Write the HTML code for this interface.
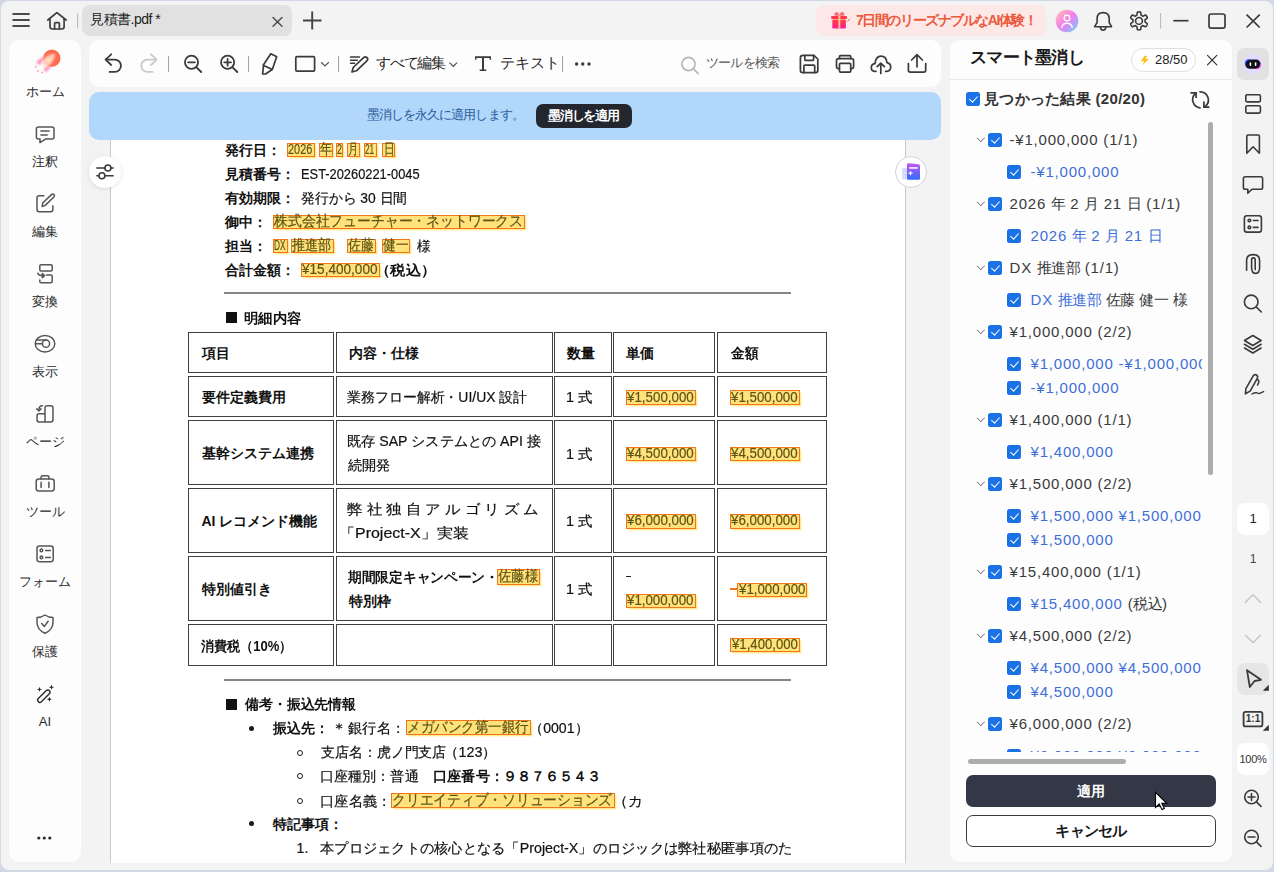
<!DOCTYPE html>
<html lang="ja">
<head>
<meta charset="utf-8">
<style>
*{box-sizing:border-box}
html,body{margin:0;padding:0}
body{width:1274px;height:872px;overflow:hidden;position:relative;background:#d3d8e6;font-family:"Liberation Sans",sans-serif;color:#222}
.a{position:absolute}
#win{left:1px;top:1px;width:1272px;height:869px;background:#f3f3f3;border-radius:8px}
.panel{position:absolute;background:#fdfdfd;border-radius:10px}
svg{position:absolute;overflow:visible}
.ic{fill:none;stroke:#3a3a3a;stroke-width:1.6;stroke-linecap:round;stroke-linejoin:round}
.nav{position:absolute;left:9px;width:72px;text-align:center;font-size:13px;color:#2a2a2a;line-height:16px}
.d{position:absolute;font-size:14px;line-height:18px;color:#111;white-space:nowrap;-webkit-text-stroke:.2px #111}
.b{font-weight:bold}
.d.b{-webkit-text-stroke:0;color:#111}
.hl{position:absolute;background:#ffe27c;border:1.8px solid #f0761c;box-shadow:1.5px 1.5px 1.5px rgba(255,215,60,.6);color:#5e5312;-webkit-text-stroke:.2px #5e5312;font-size:15px;line-height:12px;text-align:center;white-space:nowrap}
.cell{position:absolute;border:1px solid #404040}
.rp{position:absolute;font-size:15px;line-height:18px;white-space:nowrap;color:#3a3a3a;letter-spacing:.8px}
.cb{position:absolute;width:14px;height:14px;background:#1a72e6;border-radius:2.5px}
.cb::after{content:"";position:absolute;left:4.6px;top:2px;width:3.6px;height:7px;border:solid #fff;border-width:0 1.8px 1.8px 0;transform:rotate(42deg)}
.blue{color:#3d6fd8}
.chev{position:absolute;width:5.5px;height:5.5px;border:solid #808080;border-width:0 1.2px 1.2px 0;transform:rotate(45deg)}
.bul{position:absolute;width:5px;height:5px;border-radius:50%;background:#1a1a1a}
.circ{position:absolute;width:6px;height:6px;border-radius:50%;border:1px solid #1a1a1a}
</style>
</head>
<body>
<div id="win" class="a"></div>
<!-- panels -->
<div class="panel" style="left:9px;top:40px;width:72px;height:822px"></div>
<div class="panel" style="left:89px;top:40px;width:852px;height:47px"></div>
<div class="a" style="left:89px;top:92px;width:852px;height:48px;background:#b1d7fb;border-radius:10px"></div>
<div class="a" style="left:110px;top:140px;width:796px;height:723px;background:#fff;border-left:1px solid #c6cad6;border-right:1px solid #c6cad6"></div>
<div class="panel" style="left:950px;top:40px;width:282px;height:822px"></div>
<div class="a" style="left:950px;top:79px;width:282px;height:1px;background:#e8e8e8"></div>

<!-- title bar -->
<div class="a" style="left:82px;top:5px;width:210px;height:31px;background:#e1e1e1;border-radius:8px"></div>
<div class="a" style="left:90px;top:10px;font-size:14px;line-height:18px;color:#222;letter-spacing:-.5px">見積書.pdf *</div>
<div class="a" style="left:816px;top:5px;width:230px;height:31px;background:#fde8e8;border-radius:7px"></div>
<div class="a" style="left:856px;top:11px;font-size:14px;line-height:18px;color:#ec5a3c;font-weight:bold;letter-spacing:-1.45px">7日間のリーズナブルなAI体験！</div>

<!-- toolbar text -->
<div class="a" style="left:376px;top:54px;font-size:15px;line-height:18px;color:#2a2a2a;letter-spacing:-1.2px">すべて編集</div>
<div class="a" style="left:500px;top:54px;font-size:15px;line-height:18px;color:#2a2a2a">テキスト</div>
<div class="a" style="left:706px;top:55px;font-size:13px;line-height:16px;color:#555;letter-spacing:-.8px">ツールを検索</div>

<!-- blue bar -->
<div class="a" style="left:367px;top:107px;font-size:13px;line-height:16px;color:#2b5b9c;letter-spacing:-.95px">墨消しを永久に適用します。</div>
<div class="a" style="left:536px;top:104px;width:96px;height:24px;background:#23262f;border-radius:7px;color:#fff;font-size:13px;line-height:24px;text-align:center;font-weight:bold;letter-spacing:-1.1px;text-indent:-1px">墨消しを適用</div>

<!-- left nav -->
<div class="nav" style="top:84px">ホーム</div>
<div class="nav" style="top:154px">注釈</div>
<div class="nav" style="top:224px">編集</div>
<div class="nav" style="top:294px">変換</div>
<div class="nav" style="top:364px">表示</div>
<div class="nav" style="top:434px">ページ</div>
<div class="nav" style="top:504px">ツール</div>
<div class="nav" style="top:574px">フォーム</div>
<div class="nav" style="top:644px">保護</div>
<div class="nav" style="top:714px">AI</div>

<!-- right panel -->
<div class="a" style="left:970px;top:48px;font-size:17px;line-height:20px;font-weight:bold;color:#1a1a1a;letter-spacing:-.75px">スマート墨消し</div>
<div class="a" style="left:1131px;top:48px;width:65px;height:24px;border:1px solid #e0e0e0;border-radius:12px;background:#fff"></div>
<div class="a" style="left:1155px;top:51px;font-size:13px;line-height:18px;color:#222">28/50</div>
<div class="cb" style="left:966px;top:92px"></div>
<div class="rp b" style="left:984px;top:90px;color:#333;letter-spacing:.3px">見つかった結果 (20/20)</div>
<div class="a" style="left:1208px;top:122px;width:5px;height:353px;background:#adadad;border-radius:2.5px"></div>
<div class="a" style="left:968px;top:759px;width:158px;height:5px;background:#adadad;border-radius:2.5px"></div>

<!-- buttons -->
<div class="a" style="left:966px;top:775px;width:250px;height:32px;background:#343745;border-radius:7px;color:#fff;font-size:14px;line-height:32px;text-align:center;font-weight:bold">適用</div>
<div class="a" style="left:966px;top:815px;width:250px;height:32px;border:1px solid #3a3a3a;border-radius:7px;background:#fff;color:#1a1a1a;font-size:15px;line-height:30px;text-align:center;font-weight:bold;letter-spacing:-.8px">キャンセル</div>

<!-- rail -->
<div class="a" style="left:1237px;top:48px;width:32px;height:32px;background:#e1e1e1;border-radius:7px"></div>
<div class="a" style="left:1237px;top:503px;width:32px;height:32px;background:#fff;border-radius:8px;font-size:13px;line-height:32px;text-align:center;color:#222">1</div>
<div class="a" style="left:1237px;top:551px;width:32px;font-size:12px;line-height:16px;text-align:center;color:#444">1</div>
<div class="a" style="left:1237px;top:663px;width:32px;height:32px;background:#e6e6e6;border-radius:8px"></div>
<div class="a" style="left:1237px;top:743px;width:32px;height:32px;background:#fff;border-radius:8px;font-size:11px;line-height:32px;text-align:center;color:#333;letter-spacing:-.3px">100%</div>
<div class="a" style="left:1243.6px;top:711.8px;width:18.8px;height:14.6px;font-size:10px;line-height:14.6px;text-align:center;color:#333;font-weight:bold">1:1</div>
<div class="a" style="left:0;top:0;width:906px;height:863px;overflow:hidden">
<div class="d b" style="left:224.5px;top:140.5px;">発行日：</div>
<div class="hl" style="left:287.2px;top:142.7px;width:27.8px;height:14.1px;line-height:10.5px;"><span id="m_1" style="position:absolute;left:.3px;top:0;transform-origin:0 50%;transform:scaleX(0.7281);">2026</span></div>
<div class="hl" style="left:318.7px;top:142.7px;width:14.7px;height:14.1px;line-height:10.5px;"><span id="m_2" style="position:absolute;left:.3px;top:0;transform-origin:0 50%;transform:scaleX(0.8133);">年</span></div>
<div class="hl" style="left:335.8px;top:142.7px;width:7.5px;height:14.1px;line-height:10.5px;"><span id="m_3" style="position:absolute;left:.3px;top:0;transform-origin:0 50%;transform:scaleX(0.5993);">2</span></div>
<div class="hl" style="left:347px;top:142.7px;width:12.7px;height:14.1px;line-height:10.5px;"><span id="m_4" style="position:absolute;left:.3px;top:0;transform-origin:0 50%;transform:scaleX(0.6800);">月</span></div>
<div class="hl" style="left:364px;top:142.7px;width:12.7px;height:14.1px;line-height:10.5px;"><span id="m_5" style="position:absolute;left:.3px;top:0;transform-origin:0 50%;transform:scaleX(0.5513);">21</span></div>
<div class="hl" style="left:382.3px;top:142.7px;width:13.2px;height:14.1px;line-height:10.5px;"><span id="m_6" style="position:absolute;left:.3px;top:0;transform-origin:0 50%;transform:scaleX(0.7133);">日</span></div>
<div class="d b" style="left:224.5px;top:164.5px;">見積番号：</div>
<div id="m_7" class="d" style="left:300.98px;top:164.5px;transform:scaleX(0.9180);transform-origin:0 0;">EST-20260221-0045</div>
<div class="d b" style="left:224.5px;top:188.5px;">有効期限：</div>
<div id="m_8" class="d" style="left:301.01px;top:188.5px;transform:scaleX(0.9895);transform-origin:0 0;">発行から 30 日間</div>
<div class="d b" style="left:224.5px;top:212.5px;">御中：</div>
<div class="hl" style="left:272.7px;top:214.8px;width:252.6px;height:14.0px;line-height:10.4px;"><span id="m_9" style="position:absolute;left:.3px;top:0;transform-origin:0 50%;transform:scaleX(0.9226);">株式会社フューチャー・ネットワークス</span></div>
<div class="d b" style="left:224.5px;top:236.5px;">担当：</div>
<div class="hl" style="left:272.7px;top:238.8px;width:15.0px;height:14.0px;line-height:10.4px;"><span id="m_10" style="position:absolute;left:.3px;top:0;transform-origin:0 50%;transform:scaleX(0.5517);">DX</span></div>
<div class="hl" style="left:290.8px;top:238.8px;width:42.8px;height:14.0px;line-height:10.4px;"><span id="m_11" style="position:absolute;left:.3px;top:0;transform-origin:0 50%;transform:scaleX(0.8733);">推進部</span></div>
<div class="hl" style="left:346.5px;top:238.8px;width:29.3px;height:14.0px;line-height:10.4px;"><span id="m_12" style="position:absolute;left:.3px;top:0;transform-origin:0 50%;transform:scaleX(0.8600);">佐藤</span></div>
<div class="hl" style="left:381.5px;top:238.8px;width:28.8px;height:14.0px;line-height:10.4px;"><span id="m_13" style="position:absolute;left:.3px;top:0;transform-origin:0 50%;transform:scaleX(0.8433);">健一</span></div>
<div id="m_14" class="d" style="left:417.30px;top:236.5px;transform:scaleX(0.9923);transform-origin:0 0;">様</div>
<div class="d b" style="left:224.5px;top:260.5px;">合計金額：</div>
<div class="hl" style="left:300.7px;top:263.3px;width:79.0px;height:13.7px;line-height:10.1px;"><span id="m_15" style="position:absolute;left:.3px;top:0;transform-origin:0 50%;transform:scaleX(0.9050);">¥15,400,000</span></div>
<div id="m_16" class="d b" style="left:375.09px;top:260.5px;transform:scaleX(1.0895);transform-origin:0 0;">（税込）</div>
<div class="a" style="left:224px;top:292px;width:567px;height:2px;background:#858585"></div>
<div class="a" style="left:226px;top:312px;width:11px;height:11px;background:#111"></div>
<div id="m_17" class="d b" style="left:244.26px;top:308.5px;transform:scaleX(1.0259);transform-origin:0 0;">明細内容</div>
<div class="cell" style="left:188px;top:332px;width:146px;height:41px"></div>
<div class="cell" style="left:336px;top:332px;width:217px;height:41px"></div>
<div class="cell" style="left:554px;top:332px;width:58px;height:41px"></div>
<div class="cell" style="left:613px;top:332px;width:102px;height:41px"></div>
<div class="cell" style="left:717px;top:332px;width:110px;height:41px"></div>
<div class="cell" style="left:188px;top:376px;width:146px;height:41px"></div>
<div class="cell" style="left:336px;top:376px;width:217px;height:41px"></div>
<div class="cell" style="left:554px;top:376px;width:58px;height:41px"></div>
<div class="cell" style="left:613px;top:376px;width:102px;height:41px"></div>
<div class="cell" style="left:717px;top:376px;width:110px;height:41px"></div>
<div class="cell" style="left:188px;top:420px;width:146px;height:65px"></div>
<div class="cell" style="left:336px;top:420px;width:217px;height:65px"></div>
<div class="cell" style="left:554px;top:420px;width:58px;height:65px"></div>
<div class="cell" style="left:613px;top:420px;width:102px;height:65px"></div>
<div class="cell" style="left:717px;top:420px;width:110px;height:65px"></div>
<div class="cell" style="left:188px;top:488px;width:146px;height:65px"></div>
<div class="cell" style="left:336px;top:488px;width:217px;height:65px"></div>
<div class="cell" style="left:554px;top:488px;width:58px;height:65px"></div>
<div class="cell" style="left:613px;top:488px;width:102px;height:65px"></div>
<div class="cell" style="left:717px;top:488px;width:110px;height:65px"></div>
<div class="cell" style="left:188px;top:556px;width:146px;height:65px"></div>
<div class="cell" style="left:336px;top:556px;width:217px;height:65px"></div>
<div class="cell" style="left:554px;top:556px;width:58px;height:65px"></div>
<div class="cell" style="left:613px;top:556px;width:102px;height:65px"></div>
<div class="cell" style="left:717px;top:556px;width:110px;height:65px"></div>
<div class="cell" style="left:188px;top:624px;width:146px;height:42px"></div>
<div class="cell" style="left:336px;top:624px;width:217px;height:42px"></div>
<div class="cell" style="left:554px;top:624px;width:58px;height:42px"></div>
<div class="cell" style="left:613px;top:624px;width:102px;height:42px"></div>
<div class="cell" style="left:717px;top:624px;width:110px;height:42px"></div>
<div class="d b" style="left:201.5px;top:343.5px;">項目</div>
<div class="d b" style="left:348.5px;top:343.5px;">内容・仕様</div>
<div id="m_18" class="d b" style="left:567.00px;top:343.5px;transform:scaleX(1.0000);transform-origin:0 0;">数量</div>
<div class="d b" style="left:626px;top:343.5px;">単価</div>
<div id="m_19" class="d b" style="left:730.50px;top:343.5px;transform:scaleX(0.9714);transform-origin:0 0;">金額</div>
<div class="d b" style="left:201.5px;top:388px;">要件定義費用</div>
<div id="m_20" class="d" style="left:346.91px;top:388px;transform:scaleX(0.9944);transform-origin:0 0;">業務フロー解析・UI/UX 設計</div>
<div id="m_21" class="d" style="left:565.97px;top:388px;transform:scaleX(1.0292);transform-origin:0 0;">1 式</div>
<div class="hl" style="left:626px;top:390.2px;width:70.3px;height:14.6px;line-height:11.0px;"><span id="m_22" style="position:absolute;left:.3px;top:0;transform-origin:0 50%;transform:scaleX(0.8897);">¥1,500,000</span></div>
<div class="hl" style="left:730px;top:390.2px;width:70.1px;height:14.6px;line-height:11.0px;"><span id="m_23" style="position:absolute;left:.3px;top:0;transform-origin:0 50%;transform:scaleX(0.8871);">¥1,500,000</span></div>
<div class="d b" style="left:201.5px;top:443.7px;">基幹システム連携</div>
<div id="m_24" class="d" style="left:346.88px;top:431.8px;transform:scaleX(1.0106);transform-origin:0 0;">既存 SAP システムとの API 接</div>
<div id="m_25" class="d" style="left:347.89px;top:456px;transform:scaleX(1.0122);transform-origin:0 0;">続開発</div>
<div id="m_26" class="d" style="left:565.97px;top:444.5px;transform:scaleX(1.0292);transform-origin:0 0;">1 式</div>
<div class="hl" style="left:626px;top:446.5px;width:70.3px;height:14.5px;line-height:10.9px;"><span id="m_27" style="position:absolute;left:.3px;top:0;transform-origin:0 50%;transform:scaleX(0.8897);">¥4,500,000</span></div>
<div class="hl" style="left:730px;top:446.5px;width:70.1px;height:14.5px;line-height:10.9px;"><span id="m_28" style="position:absolute;left:.3px;top:0;transform-origin:0 50%;transform:scaleX(0.8871);">¥4,500,000</span></div>
<div class="d b" style="left:201.5px;top:512.3px;">AI レコメンド機能</div>
<div id="m_29" class="d" style="left:347.36px;top:500.4px;transform:scaleX(1.0954);transform-origin:0 0;">弊 社 独 自 ア ル ゴ リ ズ ム</div>
<div id="m_30" class="d" style="left:339.07px;top:524.2px;transform:scaleX(1.1418);transform-origin:0 0;">「Project-X」実装</div>
<div id="m_31" class="d" style="left:565.97px;top:512px;transform:scaleX(1.0292);transform-origin:0 0;">1 式</div>
<div class="hl" style="left:626px;top:514px;width:70.3px;height:14.5px;line-height:10.9px;"><span id="m_32" style="position:absolute;left:.3px;top:0;transform-origin:0 50%;transform:scaleX(0.8897);">¥6,000,000</span></div>
<div class="hl" style="left:730px;top:514px;width:70.1px;height:14.5px;line-height:10.9px;"><span id="m_33" style="position:absolute;left:.3px;top:0;transform-origin:0 50%;transform:scaleX(0.8871);">¥6,000,000</span></div>
<div class="d b" style="left:201.5px;top:579.8px;">特別値引き</div>
<div id="m_34" class="d b" style="left:348.01px;top:567.8px;transform:scaleX(0.9799);transform-origin:0 0;">期間限定キャンペーン・</div>
<div class="hl" style="left:496.7px;top:569.4px;width:43.6px;height:15.5px;line-height:11.9px;"><span id="m_35" style="position:absolute;left:.3px;top:0;transform-origin:0 50%;transform:scaleX(0.8911);">佐藤様</span></div>
<div class="d b" style="left:348.5px;top:591.7px;">特別枠</div>
<div id="m_36" class="d" style="left:565.97px;top:579.9px;transform:scaleX(1.0292);transform-origin:0 0;">1 式</div>
<div class="a" style="left:626px;top:575.5px;width:5px;height:1.3px;background:#222"></div>
<div class="hl" style="left:626px;top:594.3px;width:69.9px;height:13.4px;line-height:9.8px;"><span id="m_37" style="position:absolute;left:.3px;top:0;transform-origin:0 50%;transform:scaleX(0.8844);">¥1,000,000</span></div>
<div class="a" style="left:730.3px;top:588px;width:7.5px;height:2px;background:#f0781a"></div>
<div class="hl" style="left:737.3px;top:582.5px;width:69.9px;height:14.1px;line-height:10.5px;"><span id="m_38" style="position:absolute;left:.3px;top:0;transform-origin:0 50%;transform:scaleX(0.8844);">¥1,000,000</span></div>
<div id="m_39" class="d b" style="left:201.03px;top:637px;transform:scaleX(0.9315);transform-origin:0 0;">消費税（10%）</div>
<div class="hl" style="left:730.3px;top:638.3px;width:69.4px;height:14.1px;line-height:10.5px;"><span id="m_40" style="position:absolute;left:.3px;top:0;transform-origin:0 50%;transform:scaleX(0.8778);">¥1,400,000</span></div>
<div class="a" style="left:224px;top:678.5px;width:567px;height:2px;background:#858585"></div>
<div class="a" style="left:226px;top:698.5px;width:11px;height:11px;background:#111"></div>
<div id="m_41" class="d b" style="left:245.00px;top:694.8px;transform:scaleX(0.9920);transform-origin:0 0;">備考・振込先情報</div>
<div class="bul" style="left:248.5px;top:726.4px"></div>
<div id="m_42" class="d b" style="left:273.09px;top:719px;transform:scaleX(0.9980);transform-origin:0 0;">振込先：</div>
<div id="m_43" class="d" style="left:330.73px;top:719px;transform:scaleX(1.1667);transform-origin:0 0;">＊</div>
<div id="m_44" class="d" style="left:347.96px;top:719px;transform:scaleX(1.0245);transform-origin:0 0;">銀行名：</div>
<div class="hl" style="left:406px;top:720.3px;width:125.3px;height:14.9px;line-height:11.3px;"><span id="m_45" style="position:absolute;left:.3px;top:0;transform-origin:0 50%;transform:scaleX(0.9022);">メガバンク第一銀行</span></div>
<div id="m_46" class="d" style="left:528.61px;top:719px;transform:scaleX(1.0098);transform-origin:0 0;">（0001）</div>
<div class="circ" style="left:296.6px;top:749.6px"></div>
<div id="m_47" class="d" style="left:320.50px;top:743.2px;transform:scaleX(0.9944);transform-origin:0 0;">支店名：虎ノ門支店</div>
<div id="m_48" class="d" style="left:443.75px;top:743.2px;transform:scaleX(1.0273);transform-origin:0 0;">（123）</div>
<div class="circ" style="left:296.6px;top:773.4px"></div>
<div id="m_49" class="d" style="left:320.49px;top:767.4px;transform:scaleX(1.0063);transform-origin:0 0;">口座種別：普通</div>
<div id="m_50" class="d b" style="left:432.58px;top:767.4px;transform:scaleX(1.0159);transform-origin:0 0;">口座番号：</div>
<div id="m_51" class="d b" style="left:502.70px;top:767.4px;letter-spacing:0.050px;">９８７６５４３</div>
<div class="circ" style="left:296.6px;top:797.5px"></div>
<div id="m_52" class="d" style="left:320.48px;top:791.5px;transform:scaleX(1.0222);transform-origin:0 0;">口座名義：</div>
<div class="hl" style="left:391.2px;top:792.5px;width:223.6px;height:15.0px;line-height:11.4px;"><span id="m_53" style="position:absolute;left:.3px;top:0;transform-origin:0 50%;transform:scaleX(0.9171);">クリエイティブ・ソリューションズ</span></div>
<div id="m_54" class="d" style="left:612.92px;top:791.5px;transform:scaleX(1.0529);transform-origin:0 0;">（カ</div>
<div class="bul" style="left:248.5px;top:821px"></div>
<div class="d b" style="left:273px;top:814.5px;">特記事項：</div>
<div class="d" style="left:296.6px;top:838.6px;">1.</div>
<div id="m_55" class="d" style="left:319.58px;top:838.6px;transform:scaleX(1.0189);transform-origin:0 0;">本プロジェクトの核心となる「Project-X」のロジックは弊社秘匿事項のた</div>
</div>
<div class="a" style="left:950px;top:118px;width:252px;height:634px;overflow:hidden"><div class="chev" style="left:27.600000000000023px;top:17.2px"></div>
<div class="cb" style="left:38px;top:15px"></div>
<div class="rp" style="left:59.5px;top:13px">-¥1,000,000 (1/1)</div>
<div class="cb" style="left:57px;top:47px"></div>
<div class="rp" style="left:80.5px;top:45px"><span class="blue">-¥1,000,000</span></div>
<div class="chev" style="left:27.600000000000023px;top:81.2px"></div>
<div class="cb" style="left:38px;top:79px"></div>
<div class="rp" style="left:59.5px;top:77px">2026 <span style="letter-spacing:-.7px">年</span> 2 <span style="letter-spacing:-.7px">月</span> 21 <span style="letter-spacing:-.7px">日</span> (1/1)</div>
<div class="cb" style="left:57px;top:111px"></div>
<div class="rp" style="left:80.5px;top:109px"><span class="blue">2026 <span style="letter-spacing:-.7px">年</span> 2 <span style="letter-spacing:-.7px">月</span> 21 <span style="letter-spacing:-.7px">日</span></span></div>
<div class="chev" style="left:27.600000000000023px;top:145.2px"></div>
<div class="cb" style="left:38px;top:143px"></div>
<div class="rp" style="left:59.5px;top:141px">DX <span style="letter-spacing:-.7px">推進部</span> (1/1)</div>
<div class="cb" style="left:57px;top:175px"></div>
<div class="rp" style="left:80.5px;top:173px"><span class="blue">DX <span style="letter-spacing:-.7px">推進部</span></span><span class=""> <span style="letter-spacing:-.7px">佐藤</span> <span style="letter-spacing:-.7px">健一</span> <span style="letter-spacing:-.7px">様</span></span></div>
<div class="chev" style="left:27.600000000000023px;top:209.2px"></div>
<div class="cb" style="left:38px;top:207px"></div>
<div class="rp" style="left:59.5px;top:205px">¥1,000,000 (2/2)</div>
<div class="cb" style="left:57px;top:239px"></div>
<div class="rp" style="left:80.5px;top:237px"><span class="blue">¥1,000,000 -¥1,000,000</span></div>
<div class="cb" style="left:57px;top:263px"></div>
<div class="rp" style="left:80.5px;top:261px"><span class="blue">-¥1,000,000</span></div>
<div class="chev" style="left:27.600000000000023px;top:297.2px"></div>
<div class="cb" style="left:38px;top:295px"></div>
<div class="rp" style="left:59.5px;top:293px">¥1,400,000 (1/1)</div>
<div class="cb" style="left:57px;top:327px"></div>
<div class="rp" style="left:80.5px;top:325px"><span class="blue">¥1,400,000</span></div>
<div class="chev" style="left:27.600000000000023px;top:361.2px"></div>
<div class="cb" style="left:38px;top:359px"></div>
<div class="rp" style="left:59.5px;top:357px">¥1,500,000 (2/2)</div>
<div class="cb" style="left:57px;top:391px"></div>
<div class="rp" style="left:80.5px;top:389px"><span class="blue">¥1,500,000 ¥1,500,000</span></div>
<div class="cb" style="left:57px;top:415px"></div>
<div class="rp" style="left:80.5px;top:413px"><span class="blue">¥1,500,000</span></div>
<div class="chev" style="left:27.600000000000023px;top:449.2px"></div>
<div class="cb" style="left:38px;top:447px"></div>
<div class="rp" style="left:59.5px;top:445px">¥15,400,000 (1/1)</div>
<div class="cb" style="left:57px;top:479px"></div>
<div class="rp" style="left:80.5px;top:477px"><span class="blue">¥15,400,000</span><span class=""> (<span style="letter-spacing:-.7px">税込</span>)</span></div>
<div class="chev" style="left:27.600000000000023px;top:513.2px"></div>
<div class="cb" style="left:38px;top:511px"></div>
<div class="rp" style="left:59.5px;top:509px">¥4,500,000 (2/2)</div>
<div class="cb" style="left:57px;top:543px"></div>
<div class="rp" style="left:80.5px;top:541px"><span class="blue">¥4,500,000 ¥4,500,000</span></div>
<div class="cb" style="left:57px;top:567px"></div>
<div class="rp" style="left:80.5px;top:565px"><span class="blue">¥4,500,000</span></div>
<div class="chev" style="left:27.600000000000023px;top:601.2px"></div>
<div class="cb" style="left:38px;top:599px"></div>
<div class="rp" style="left:59.5px;top:597px">¥6,000,000 (2/2)</div>
<div class="cb" style="left:57px;top:631px"></div>
<div class="rp" style="left:80.5px;top:629px"><span class="blue">¥6,000,000 ¥6,000,000</span></div></div><svg class="a" style="left:0;top:0" width="1274" height="872" viewBox="0 0 1274 872">
<defs>
<linearGradient id="gGift" x1="0" y1="0" x2="0" y2="1"><stop offset="0" stop-color="#ff4040"/><stop offset="1" stop-color="#ff1a9c"/></linearGradient>
<linearGradient id="gAv" x1="0" y1="0" x2="1" y2="1"><stop offset="0" stop-color="#ffc6a8"/><stop offset=".5" stop-color="#f37cf0"/><stop offset="1" stop-color="#5fd7ff"/></linearGradient>
<radialGradient id="gRocket" cx=".5" cy=".5" r=".5"><stop offset="0" stop-color="#ff8a5c"/><stop offset="1" stop-color="#ff6a4a"/></radialGradient>
<linearGradient id="gNote" x1="0" y1="0" x2="0" y2="1"><stop offset="0" stop-color="#c558f0"/><stop offset="1" stop-color="#2f6bff"/></linearGradient>
<filter id="blur1"><feGaussianBlur stdDeviation="1.2"/></filter>
<filter id="sh" x="-50%" y="-50%" width="200%" height="200%"><feDropShadow dx="0" dy="1" stdDeviation="2" flood-color="#000" flood-opacity=".12"/></filter>
</defs>
<!-- ===== title bar ===== -->
<g class="ic" style="stroke:#4a4a4a;stroke-width:2;stroke-linecap:butt">
<path d="M12.5,14H29.7M12.5,20H29.7M12.5,26H29.7"/>
</g>
<g class="ic" style="stroke:#3c3c3c;stroke-width:1.7">
<path d="M47.8,20 L56.9,12.6 L66.2,20"/>
<path d="M50,19 V26.8 Q50,29 52.2,29 H61.9 Q64.1,29 64.1,26.8 V19"/>
<path d="M54.6,29 V23.6 Q54.6,22.6 55.6,22.6 H58.4 Q59.4,22.6 59.4,23.6 V29"/>
</g>
<rect x="77" y="13.5" width="1.1" height="15" fill="#b8bcc8"/>
<g class="ic" style="stroke:#444;stroke-width:1.3">
<path d="M273,17.5 L282,26.2 M282,17.5 L273,26.2"/>
</g>
<g class="ic" style="stroke:#444;stroke-width:1.9;stroke-linecap:butt">
<path d="M303,20.5 H321.5 M312.2,11.5 V29.5"/>
</g>
<!-- gift -->
<g>
<path d="M834.5,15.8 Q834,12 836.5,12 Q838.5,12 839.3,15.6 Q840.1,12 842.3,12 Q844.8,12 844.2,15.8Z" fill="#ff6b7a"/>
<rect x="831.2" y="15.9" width="15.8" height="3" rx=".6" fill="#ff3a4e"/>
<rect x="832.3" y="19.6" width="13.6" height="9" rx="1" fill="url(#gGift)"/>
<rect x="838.4" y="15.9" width="1.9" height="12.7" fill="#ffe08a" opacity=".85"/>
<path d="M847.5,21.5 L849.8,18.8" stroke="#d46060" stroke-width="1" fill="none"/>
</g>
<!-- avatar -->
<circle cx="1067" cy="21" r="11.3" fill="url(#gAv)"/>
<g class="ic" style="stroke:#fff;stroke-width:1.4">
<rect x="1064.3" y="15.2" width="5.4" height="5.6" rx="2.2"/>
<path d="M1061.8,27.5 Q1062.3,23.3 1067,23.3 Q1071.7,23.3 1072.2,27.5"/>
</g>
<!-- bell -->
<g class="ic" style="stroke:#3a3a3a;stroke-width:1.6">
<path d="M1094.6,26.7 H1111.5 L1109.2,22.5 V18.7 Q1109.2,12.6 1103.1,12.6 Q1097.1,12.6 1097.1,18.7 V22.5 Z"/>
<path d="M1100.3,27 Q1100.6,30.2 1103.1,30.2 Q1105.6,30.2 1105.9,27"/>
</g>
<!-- gear -->
<g class="ic" style="stroke:#3a3a3a;stroke-width:1.6">
<path d="M1145.0,20.9 L1145.0,21.2 L1145.0,21.5 L1145.0,21.9 L1145.3,22.2 L1146.2,22.8 L1147.2,23.6 L1147.3,24.1 L1147.2,24.5 L1147.0,25.0 L1146.8,25.4 L1146.5,25.8 L1146.2,26.2 L1145.9,26.5 L1145.4,26.7 L1144.3,26.2 L1143.3,25.7 L1142.8,25.6 L1142.6,25.8 L1142.3,26.0 L1142.0,26.1 L1141.7,26.3 L1141.5,26.4 L1141.2,26.6 L1141.0,27.0 L1140.9,28.1 L1140.8,29.3 L1140.4,29.7 L1139.9,29.8 L1139.5,29.8 L1139.0,29.8 L1138.5,29.8 L1138.1,29.8 L1137.6,29.7 L1137.2,29.3 L1137.1,28.1 L1137.0,27.0 L1136.8,26.6 L1136.5,26.4 L1136.3,26.3 L1136.0,26.1 L1135.7,26.0 L1135.4,25.8 L1135.2,25.6 L1134.7,25.7 L1133.7,26.2 L1132.6,26.7 L1132.1,26.5 L1131.8,26.2 L1131.5,25.8 L1131.2,25.4 L1131.0,25.0 L1130.8,24.5 L1130.7,24.1 L1130.8,23.6 L1131.8,22.8 L1132.7,22.2 L1133.0,21.9 L1133.0,21.5 L1133.0,21.2 L1133.0,20.9 L1133.0,20.6 L1133.0,20.3 L1133.0,19.9 L1132.7,19.6 L1131.8,19.0 L1130.8,18.2 L1130.7,17.7 L1130.8,17.3 L1131.0,16.8 L1131.2,16.4 L1131.5,16.0 L1131.8,15.6 L1132.1,15.3 L1132.6,15.1 L1133.7,15.6 L1134.7,16.1 L1135.2,16.2 L1135.4,16.0 L1135.7,15.8 L1136.0,15.7 L1136.3,15.5 L1136.5,15.4 L1136.8,15.2 L1137.0,14.8 L1137.1,13.7 L1137.2,12.5 L1137.6,12.1 L1138.1,12.0 L1138.5,12.0 L1139.0,11.9 L1139.5,12.0 L1139.9,12.0 L1140.4,12.1 L1140.8,12.5 L1140.9,13.7 L1141.0,14.8 L1141.2,15.2 L1141.5,15.4 L1141.7,15.5 L1142.0,15.7 L1142.3,15.8 L1142.6,16.0 L1142.8,16.2 L1143.3,16.1 L1144.3,15.6 L1145.4,15.1 L1145.9,15.3 L1146.2,15.6 L1146.5,16.0 L1146.8,16.4 L1147.0,16.8 L1147.2,17.3 L1147.3,17.7 L1147.2,18.2 L1146.2,19.0 L1145.3,19.6 L1145.0,19.9 L1145.0,20.3 L1145.0,20.6Z"/>
<circle cx="1139" cy="20.9" r="3.4"/>
</g>
<rect x="1160" y="13" width="1.1" height="15.6" fill="#b8bcc8"/>
<g class="ic" style="stroke:#3a3a3a;stroke-width:1.7;stroke-linecap:butt">
<path d="M1173.3,20.7 H1188.5"/>
<rect x="1209" y="14" width="16" height="14.2" rx="2.2"/>
<path d="M1246.6,14.6 L1259.7,27.5 M1259.7,14.6 L1246.6,27.5"/>
</g>
<!-- ===== toolbar ===== -->
<g class="ic" style="stroke:#3a3a3a;stroke-width:1.8">
<path d="M111.2,54.3 L105.6,59.6 L111.2,65"/>
<path d="M105.8,59.6 H114.8 A6.15,6.15 0 0 1 114.8,71.9 H109.6"/>
</g>
<g class="ic" style="stroke:#c9c9c9;stroke-width:1.8">
<path d="M151,54.3 L156.6,59.6 L151,65"/>
<path d="M156.4,59.6 H147.4 A6.15,6.15 0 0 0 147.4,71.9 H152.6"/>
</g>
<rect x="168" y="56" width="1.1" height="16" fill="#a8a8a8"/>
<g class="ic" style="stroke:#3a3a3a;stroke-width:1.8">
<circle cx="191.5" cy="62.3" r="6.6"/><path d="M196.5,67.3 L201.2,72 M188.1,62.3 H194.9"/>
<circle cx="227.6" cy="62.3" r="6.6"/><path d="M232.6,67.3 L237.3,72 M224.2,62.3 H231 M227.6,58.9 V65.7"/>
</g>
<rect x="248" y="56" width="1.1" height="16" fill="#a8a8a8"/>
<g class="ic" style="stroke:#3a3a3a;stroke-width:1.7">
<path d="M270.8,53.8 L276.7,56.8 L272.3,69.5 L263.2,65.3 Z"/>
<path d="M263.5,66 L262.6,73.8 L265.6,74 L271.8,69.8"/>
<rect x="295.8" y="56.6" width="18.8" height="14.5" rx="1.2"/>
</g>
<path d="M321.2,62.3 L325,66 L328.8,62.3" fill="none" stroke="#555" stroke-width="1.2"/>
<rect x="338" y="56" width="1.1" height="16" fill="#a8a8a8"/>
<g class="ic" style="stroke:#3a3a3a;stroke-width:1.7">
<path d="M352,72 L353.2,67.5 L363.6,57.6 Q365.4,56 367,57.6 Q368.5,59.2 366.9,60.9 L356.4,70.8 Z"/>
<path d="M350.5,57 H359.5 M350.5,60.2 H357.4 M350.5,63.3 H354.6" style="stroke-width:1.5"/>
</g>
<path d="M449.5,62.6 L453.3,66.3 L457.1,62.6" fill="none" stroke="#555" stroke-width="1.2"/>
<g fill="#3a3a3a">
<path d="M475,56.3 H491 V59.8 H489.6 V57.9 H484 V69.6 H486.3 V71.1 H479.7 V69.6 H482 V57.9 H476.4 V59.8 H475 Z"/>
</g>
<rect x="562" y="56" width="1.1" height="16" fill="#a8a8a8"/>
<g fill="#3a3a3a"><circle cx="576.6" cy="64" r="1.7"/><circle cx="582.8" cy="64" r="1.7"/><circle cx="589" cy="64" r="1.7"/></g>
<g class="ic" style="stroke:#b5b5b5;stroke-width:1.6">
<circle cx="688.5" cy="64" r="6.6"/><path d="M693.4,68.9 L698.3,73.6"/>
</g>
<g class="ic" style="stroke:#3a3a3a;stroke-width:1.7">
<path d="M803,55.4 H814 L817.8,59 V70.2 Q817.8,72.6 815.4,72.6 H802.8 Q800.4,72.6 800.4,70.2 V57.8 Q800.4,55.4 803,55.4 Z"/>
<path d="M804.8,55.6 V59.4 Q804.8,60.4 805.8,60.4 H812.6 Q813.6,60.4 813.6,59.4 V55.6"/>
<path d="M803.9,72.4 V66.1 Q803.9,65.1 804.9,65.1 H813.7 Q814.7,65.1 814.7,66.1 V72.4"/>
<path d="M839.5,58.4 V56.6 Q839.5,55.7 840.4,55.7 H849.8 Q850.7,55.7 850.7,56.6 V58.4"/>
<path d="M839.3,68.6 H838.6 Q836.5,68.6 836.5,66.5 V60.7 Q836.5,58.6 838.6,58.6 H851.5 Q853.6,58.6 853.6,60.7 V66.5 Q853.6,68.6 851.5,68.6 H850.9"/>
<rect x="839.5" y="63.3" width="11.2" height="8.8" rx="1"/>
<path d="M876,71.3 H874.6 Q871.3,71.3 871.3,67.6 Q871.3,64.1 875,63.7 Q875.8,56.2 881,56.2 Q886.3,56.2 887,62.6 Q890.7,63.3 890.7,67.1 Q890.7,71.3 886.6,71.3 H885.6"/>
<path d="M880.8,73.5 V63.2 M877.2,66.7 L880.8,63.1 L884.4,66.7"/>
<path d="M908.4,63.5 V70.3 Q908.4,72.2 910.3,72.2 H923.8 Q925.7,72.2 925.7,70.3 V63.5"/>
<path d="M917,66.8 V54.8 M911.6,60 L917,54.6 L922.4,60"/>
</g>
<!-- page float buttons -->
<circle cx="105" cy="172" r="15.8" fill="#fff" filter="url(#sh)"/>
<g class="ic" style="stroke:#3a3a3a;stroke-width:1.6;stroke-linecap:butt">
<path d="M96.3,168 H104.8 M111,168 H113.7 M96.3,175.8 H98.8 M105.1,175.8 H113.7"/>
<circle cx="107.9" cy="168" r="3"/><circle cx="101.9" cy="175.8" r="3"/>
</g>
<circle cx="911" cy="172" r="15.5" fill="#fff" stroke="#cfd3dc" stroke-width="1"/>
<rect x="902" y="168" width="6" height="11.5" rx="1.5" fill="#d7dcff"/>
<path d="M907,164.5 Q907,163 908.8,163.2 L918.5,164.3 Q920,164.5 920,166 V178.2 Q920,179.7 918.5,179.7 H908.5 Q907,179.7 907,178.2 Z" fill="url(#gNote)"/>
<rect x="909.2" y="167.2" width="8.6" height="1.5" fill="#fff"/>
<path d="M910.5,171.2 V175.2 M908.5,173.2 H912.5" stroke="#fff" stroke-width="1.2"/>
<!-- ===== left nav icons ===== -->
<g filter="url(#blur1)">
<path d="M36.5,62 L43.5,56.5 L46,59.5 L39,65 Z" fill="#ff5aa0" opacity=".75"/>
<path d="M46,72 L51.5,66.5 L48.5,64 L43.5,69.5 Z" fill="#ff5aa0" opacity=".7"/>
</g>
<circle cx="51.8" cy="58.2" r="8.6" fill="#ff6a4c"/>
<path d="M55,53.5 Q47,53.8 40.5,62.5 L46.5,68 Q55.5,61 55,53.5 Z" fill="#ffd6c8" filter="url(#blur1)" opacity=".9"/>
<circle cx="49" cy="59.8" r="1.8" fill="#fff3a0" filter="url(#blur1)"/>
<g fill="#ffa0b8"><circle cx="36" cy="66.7" r="1"/><circle cx="38" cy="71" r="1"/><circle cx="42.2" cy="72.6" r="1"/></g>
<g class="ic" style="stroke:#555;stroke-width:1.5">
<path d="M38.4,127 H52 Q54,127 54,129 V136.9 Q54,138.9 52,138.9 H45.8 L40,142.7 V138.9 H38.4 Q36.4,138.9 36.4,136.9 V129 Q36.4,127 38.4,127 Z"/>
<path d="M40.9,131 H49.1 M40.9,135 H47.2"/>
<path d="M43.9,195.7 H39.2 Q37,195.7 37,197.9 V209.5 Q37,211.7 39.2,211.7 H50.7 Q52.9,211.7 52.9,209.5 V205.7"/>
<path d="M42.2,206.5 L42.7,203 L51.5,194.6 Q52.7,193.5 53.9,194.6 Q55,195.8 53.9,197 L45.2,205.4 Z"/>
<rect x="39.8" y="264.8" width="12.4" height="6.1" rx="1.2"/>
<path d="M39.8,280 V281.4 Q39.8,282.8 41.2,282.8 H50.8 Q52.2,282.8 52.2,281.4 V276.3 Q52.2,274.9 50.8,274.9 H46.6"/>
<path d="M37.8,273.2 Q38.3,275.6 41.5,275.6 H42.5"/>
<path d="M42.3,273.5 L44.6,275.6 L42.3,277.7 Z" fill="#555"/>
<ellipse cx="45" cy="343.7" rx="9.8" ry="8.2"/>
<circle cx="46" cy="343.7" r="3.6"/>
<path d="M36.6,340.1 H46 M35.8,343.7 H42.4" />
<path d="M45,421.9 V407.9 Q45,405.7 47.2,405.7 H50.8 Q53,405.7 53,407.9 V419.7 Q53,421.9 50.8,421.9 H39.2 Q37,421.9 37,419.7 V416 Q37,413.8 39.2,413.8 H45"/>
<path d="M42.4,405.8 Q38.9,405.8 38.9,410"/>
<path d="M36.8,408.9 L38.9,411 L41,408.9" />
<rect x="36.2" y="479" width="18" height="12" rx="2.4"/>
<path d="M41,479 V477.5 Q41,475.8 42.7,475.8 H47.3 Q49,475.8 49,477.5 V479 M41.1,482.2 V487.5 M48.9,482.2 V487.5"/>
<rect x="37" y="546" width="16.2" height="15.7" rx="2.4"/>
<circle cx="41.4" cy="550.4" r="1.3"/><circle cx="41.4" cy="557.4" r="1.3"/>
<path d="M45.6,550.4 H50.4 M45.6,557.4 H50.4"/>
<path d="M45,615 Q41.5,617.5 37,617.6 V623 Q37.5,630 45,633.3 Q52.5,630 53,623 V617.6 Q48.5,617.5 45,615 Z"/>
<path d="M41.7,623.6 L44.4,626.4 L48.1,621.3"/>
<path d="M38.4,701.8 Q36.8,700.2 38.3,698.6 L46.3,690.6 Q47.9,689.2 49.4,690.6 Q50.8,692.2 49.3,693.7 L41.4,701.8 Q39.9,703.2 38.4,701.8 Z" style="stroke:#2a2a2a;stroke-width:1.4"/>
</g>
<g fill="#2a2a2a">
<path d="M39.5,686.8 L40.2,688.7 L42.1,689.4 L40.2,690.1 L39.5,692 L38.8,690.1 L36.9,689.4 L38.8,688.7Z"/>
<path d="M51.5,684.8 L52.2,686.6 L54,687.3 L52.2,688 L51.5,689.8 L50.8,688 L49,687.3 L50.8,686.6Z"/>
<path d="M49.4,696.8 L50.1,698.6 L51.9,699.3 L50.1,700 L49.4,701.8 L48.7,700 L46.9,699.3 L48.7,698.6Z"/>
<circle cx="38.8" cy="838" r="1.6"/><circle cx="44.3" cy="838" r="1.6"/><circle cx="49.8" cy="838" r="1.6"/>
</g>
<!-- ===== right panel icons ===== -->
<path d="M1144.6,55.7 L1140.8,61.2 H1144.2 L1142.4,65.3 L1149,58.9 H1145.5 L1147.2,55.7 Z" fill="#f6c21c"/>
<g class="ic" style="stroke:#333;stroke-width:1.2">
<path d="M1207.5,55.4 L1216.8,64.8 M1216.8,55.4 L1207.5,64.8"/>
</g>
<g class="ic" style="stroke:#3a3a3a;stroke-width:1.7">
<path d="M1200,107.8 A8.2,8.2 0 0 1 1195.6,93.4"/>
<path d="M1190.4,92.9 H1196.1 V98.1" style="stroke-linecap:butt;stroke-linejoin:miter"/>
<path d="M1199.9,91.8 A8.2,8.2 0 0 1 1205,106.6"/>
<path d="M1203.9,101.6 V107.1 H1209.4" style="stroke-linecap:butt;stroke-linejoin:miter"/>
</g>
<!-- ===== rail icons ===== -->
<circle cx="1253" cy="64" r="10" fill="#e4dcff"/>
<rect x="1245.3" y="59.6" width="15.4" height="9.2" rx="4.6" fill="#101018"/>
<path d="M1245.3,64 Q1245.3,59.6 1249.7,59.6" stroke="#2a5bff" stroke-width="1.3" fill="none"/>
<path d="M1260.7,64 Q1260.7,68.8 1256.3,68.8" stroke="#ff58d0" stroke-width="1.3" fill="none"/>
<rect x="1249.6" y="62.2" width="1.6" height="3.8" rx=".8" fill="#fff"/>
<rect x="1254.8" y="62.2" width="1.6" height="3.8" rx=".8" fill="#fff"/>
<g class="ic" style="stroke:#3a3a3a;stroke-width:1.6">
<rect x="1245.8" y="94.8" width="14.6" height="7.1" rx="1.3"/>
<rect x="1245.8" y="105.8" width="14.6" height="7.3" rx="1.3"/>
<path d="M1246.8,153.3 V136.2 Q1246.8,135 1248,135 H1258.2 Q1259.4,135 1259.4,136.2 V153.3 L1253.1,146.8 Z"/>
<path d="M1245.2,176.8 H1260.8 Q1262.6,176.8 1262.6,178.6 V187.4 Q1262.6,189.2 1260.8,189.2 H1252 L1247.8,193.3 V189.2 H1245.2 Q1243.4,189.2 1243.4,187.4 V178.6 Q1243.4,176.8 1245.2,176.8 Z"/>
<rect x="1244.4" y="215.8" width="17" height="16.3" rx="2.4"/>
<circle cx="1249.4" cy="220.5" r="1.3"/><circle cx="1249.4" cy="227.4" r="1.3"/>
<path d="M1253.3,220.5 H1258 M1253.3,227.4 H1258"/>
<path d="M1246.6,270.3 V260.4 Q1246.6,254.6 1253.1,254.6 Q1259.6,254.6 1259.6,260.4 V267.5 Q1259.6,273.4 1255.6,273.4 Q1251.6,273.4 1251.6,267.5 V259.9 Q1251.6,257.9 1253.4,257.9 Q1255.2,257.9 1255.2,259.9 V269.6"/>
<circle cx="1251.2" cy="301.9" r="6.8"/>
<path d="M1256.2,306.9 L1261.3,312"/>
<path d="M1244.5,340.5 L1252.8,335.5 L1261.1,340.5 L1252.8,345.5 Z"/>
<path d="M1244.5,344.3 L1252.8,349.3 L1261.1,344.3 M1244.5,348 L1252.8,353 L1261.1,348"/>
<path d="M1245.4,393.8 L1245.9,388.6 L1253.2,375.8 Q1254.5,373.9 1256.5,375 Q1258.4,376.3 1257.3,378.3 L1250.1,391.1 Z"/>
<path d="M1257.6,379.5 Q1259.2,380.3 1258.8,382.2 L1257.6,385"/>
<path d="M1252,394 Q1254.5,392.3 1256.8,392.8 Q1258.2,393.8 1259.6,393.3 L1263.6,391.6" style="stroke-width:1.4"/>
</g>
<g class="ic" style="stroke:#c8c8c8;stroke-width:1.5">
<path d="M1245.4,602.4 L1253,594.8 L1260.6,602.4"/>
<path d="M1245.4,635.2 L1253,642.8 L1260.6,635.2"/>
</g>
<g class="ic" style="stroke:#3a3a3a;stroke-width:1.8">
<path d="M1247,670.2 L1261,679.8 L1254.5,681 L1249.8,687 Z"/>
<rect x="1243.6" y="711.8" width="18.8" height="14.6" rx="2"/>
</g>
<path d="M1268.8,684.8 V690.8 H1262.8 Z" fill="#333"/>
<path d="M1268.8,724.8 V730.8 H1262.8 Z" fill="#333"/>
<g class="ic" style="stroke:#3a3a3a;stroke-width:1.6">
<circle cx="1251.5" cy="797" r="6.8"/><path d="M1256.4,801.9 L1261,806.4 M1248,797 H1255 M1251.5,793.5 V800.5"/>
<circle cx="1251.5" cy="837" r="6.8"/><path d="M1256.4,841.9 L1261,846.4 M1248,837 H1255"/>
</g>
<!-- cursor -->
<path d="M1155.5,792.3 V807.5 L1159.2,804 L1162,809.6 L1164.4,808.5 L1161.8,803.4 H1166.8 Z" fill="#fff" stroke="#000" stroke-width="1.1" stroke-linejoin="miter"/>
</svg>

</body>
</html>
